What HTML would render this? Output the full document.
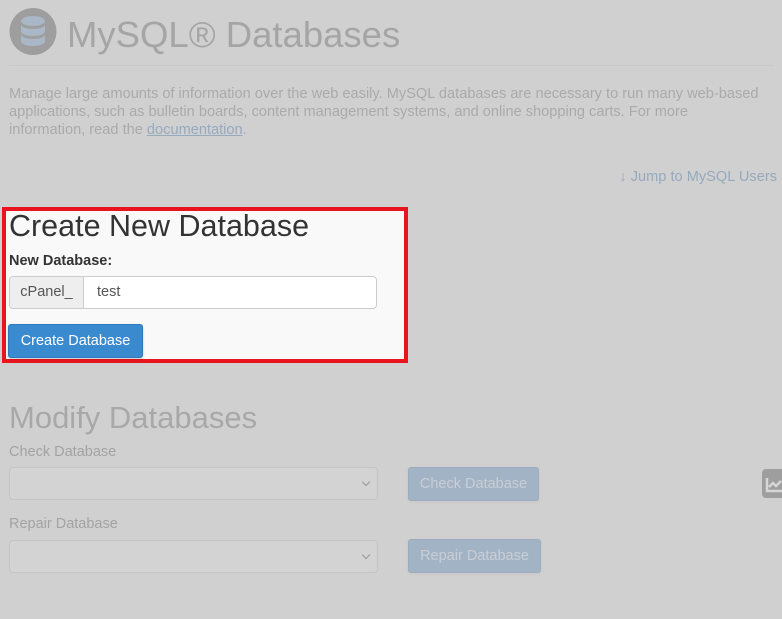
<!DOCTYPE html><html><head><style>
body{margin:0;width:782px;height:619px;background:#d0d0d0;font-family:"Liberation Sans",sans-serif;position:relative;overflow:hidden;color:#a8a8a8}
.a{position:absolute;white-space:nowrap}
.sel{position:absolute;left:9px;width:367px;height:31px;border:1px solid #c4c4c4;border-radius:4px;background:#d3d3d3}
.sel:after{content:"";position:absolute;right:8px;top:11px;width:5px;height:5px;border-right:1.5px solid #999;border-bottom:1.5px solid #999;transform:rotate(45deg)}
.gb{position:absolute;left:408px;height:32px;background:#a2b3c5;border:1px solid #9cadbf;border-radius:3px;color:#c9ced4;font-size:14.5px;line-height:32px;text-align:center;box-shadow:0 1px 3px rgba(0,0,0,.05)}
</style></head><body>
<svg class="a" style="left:9px;top:8px" width="48" height="47" viewBox="0 0 48 47"><circle cx="24" cy="23.5" r="23.5" fill="#9e9e9e"/><ellipse cx="24" cy="13" rx="12" ry="5" fill="#a9b7c6"/><path d="M12 16v7c0 3 5 5 12 5s12-2 12-5v-7c0 3-5 5-12 5s-12-2-12-5zM12 26v7c0 3 5 5 12 5s12-2 12-5v-7c0 3-5 5-12 5s-12-2-12-5z" fill="#a9b7c6"/></svg>
<div class="a" style="left:67px;top:14px;font-size:36.5px;color:#a5a5a5">MySQL® Databases</div>
<div class="a" style="left:9px;top:65px;width:765px;border-top:1px solid #c8c8c8"></div>
<div class="a" style="left:9px;top:85px;font-size:14.6px;line-height:18px;color:#aaa">Manage large amounts of information over the web easily. MySQL databases are necessary to run many web-based<br>applications, such as bulletin boards, content management systems, and online shopping carts. For more<br>information, read the <u style="color:#97a9bd">documentation</u>.</div>
<div class="a" style="right:5px;top:169px;font-size:14.6px;color:#97a9bd">↓ Jump to MySQL Users</div>
<div class="a" style="left:2px;top:207px;width:398px;height:148px;border:4px solid #e8141e;background:#f9f9f9"></div>
<div class="a" style="left:9px;top:209px;font-size:30.5px;color:#333">Create New Database</div>
<div class="a" style="left:9px;top:253px;font-size:14.5px;font-weight:bold;color:#333">New Database:</div>
<div class="a" style="left:9px;top:276px;width:366px;height:31px;border:1px solid #ccc;border-radius:4px;background:#fff;overflow:hidden">
<div style="position:absolute;left:0;top:0;width:73px;height:31px;background:#eee;border-right:1px solid #ccc;font-size:14.5px;line-height:31px;text-align:center;color:#555">cPanel_</div>
<div style="position:absolute;left:87px;top:0;line-height:31px;font-size:14.5px;color:#555">test</div></div>
<div class="a" style="left:8px;top:324px;width:133px;height:32px;background:#3a8ad0;border:1px solid #2f79bd;border-radius:3px;color:#fff;font-size:14.5px;line-height:33px;text-align:center;box-shadow:0 1px 2px rgba(0,0,0,.2)">Create Database</div>
<div class="a" style="left:9px;top:400px;font-size:31px;color:#a8a8a8">Modify Databases</div>
<div class="a" style="left:9px;top:444px;font-size:14.5px;color:#a3a3a3">Check Database</div>
<div class="sel" style="top:467px"></div>
<div class="gb" style="top:467px;width:129px">Check Database</div>
<div class="a" style="left:9px;top:516px;font-size:14.5px;color:#a3a3a3">Repair Database</div>
<div class="sel" style="top:540px"></div>
<div class="gb" style="top:539px;width:131px">Repair Database</div>
<div class="a" style="left:762px;top:469px;width:24px;height:29px;background:#9e9e9e;border-radius:4px"><svg width="20" height="29"><path d="M5 9v13h15M7 18l4-4 3 3 5-5" stroke="#d6d6d6" stroke-width="2.5" fill="none"/></svg></div>
</body></html>
